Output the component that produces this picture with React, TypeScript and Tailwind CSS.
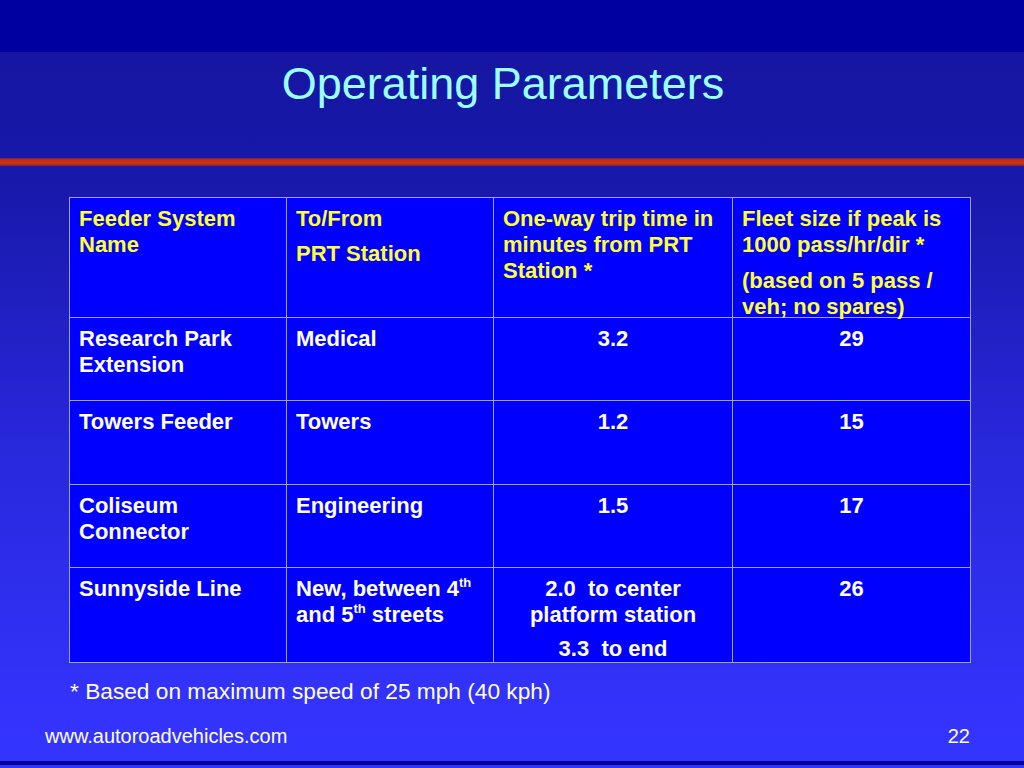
import React from "react";

const font = { fontFamily: '"Liberation Sans", Arial, Helvetica, sans-serif' };

function Sup({ children }: { children: React.ReactNode }) {
  return <sup className="text-[13px] leading-none relative -top-[9px]">{children}</sup>;
}

const cellBase = "border border-[#a0a0ff] align-top pt-[8px] px-[9px] text-[22px] leading-[26px] font-bold";

export default function App() {
  const rows: { a: React.ReactNode; b: React.ReactNode; c: React.ReactNode; d: string; h: string }[] = [
    { a: <>Research Park<br />Extension</>, b: "Medical", c: "3.2", d: "29", h: "h-[83px]" },
    { a: "Towers Feeder", b: "Towers", c: "1.2", d: "15", h: "h-[84px]" },
    { a: <>Coliseum<br />Connector</>, b: "Engineering", c: "1.5", d: "17", h: "h-[83px]" },
    {
      a: "Sunnyside Line",
      b: (
        <>
          New, between 4<Sup>th</Sup>
          <br />
          and 5<Sup>th</Sup> streets
        </>
      ),
      c: (
        <>
          <div>2.0&nbsp; to center<br />platform station</div>
          <div className="mt-[8px] -mb-[6px]">3.3&nbsp; to end</div>
        </>
      ),
      d: "26",
      h: "h-[95px]",
    },
  ];

  return (
    <div
      style={font}
      className="w-[1024px] h-[768px] overflow-hidden flex flex-col bg-[linear-gradient(to_bottom,#0000a0_0px,#0000a0_52px,#1616a2_52px,#1818aa_180px,#2828dd_450px,#3434ff_740px)]"
    >
      <div className="h-[52px] shrink-0 bg-[#0000a0]" />
      <div className="mt-[6px] h-[52px] pr-[18px] text-center text-[45px] leading-[52px] text-[#99ffff]">
        Operating Parameters
      </div>
      <div className="mt-[48px] h-[8px] bg-[linear-gradient(to_bottom,#6a2060_0px,#c03018_2px,#cc3300_4px,#c03018_6px,#6a2060_8px)]" />
      <div className="mt-[31px] pl-[69px]">
        <table className="border-collapse table-fixed w-[901px] bg-[#0000ff]">
          <colgroup>
            <col className="w-[217px]" />
            <col className="w-[207px]" />
            <col className="w-[239px]" />
            <col className="w-[238px]" />
          </colgroup>
          <tbody>
            <tr className="h-[120px] text-[#ffff33]">
              <td className={cellBase}>Feeder System<br />Name</td>
              <td className={cellBase}>
                <div>To/From</div>
                <div className="mt-[9px]">PRT Station</div>
              </td>
              <td className={cellBase}>One-way trip time in minutes from PRT Station *</td>
              <td className={cellBase}>
                <div>Fleet size if peak is 1000 pass/hr/dir *</div>
                <div className="mt-[10px] -mb-[8px]">(based on 5 pass / veh; no spares)</div>
              </td>
            </tr>
            {rows.map((r, i) => (
              <tr key={i} className={`${r.h} text-white`}>
                <td className={cellBase}>{r.a}</td>
                <td className={cellBase}>{r.b}</td>
                <td className={`${cellBase} text-center`}>{r.c}</td>
                <td className={`${cellBase} text-center`}>{r.d}</td>
              </tr>
            ))}
          </tbody>
        </table>
      </div>
      <div className="mt-[15px] pl-[70px] text-[22.7px] leading-[26px] text-white">
        * Based on maximum speed of 25 mph (40 kph)
      </div>
      <div className="mt-[20px] flex justify-between pl-[45px] pr-[54px] text-[20px] leading-[24px] text-white">
        <span>www.autoroadvehicles.com</span>
        <span>22</span>
      </div>
      <div className="mt-[13px] h-[4px] bg-[#00009a]" />
    </div>
  );
}
